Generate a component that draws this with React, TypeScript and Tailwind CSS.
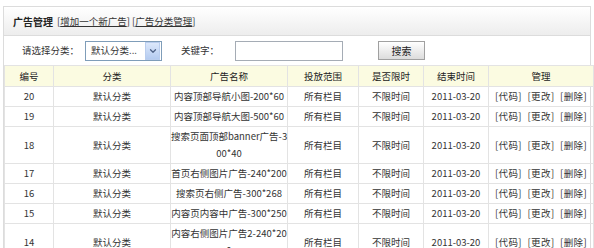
import { ChevronDown } from "lucide-react";

const rows = [
  { id: 20, name: ["内容顶部导航小图-200*60"] },
  { id: 19, name: ["内容顶部导航大图-500*60"] },
  { id: 18, name: ["搜索页面顶部banner广告-3", "00*40"] },
  { id: 17, name: ["首页右侧图片广告-240*200"] },
  { id: 16, name: ["搜索页右侧广告-300*268"] },
  { id: 15, name: ["内容页内容中广告-300*250"] },
  { id: 14, name: ["内容右侧图片广告2-240*20", "0"] },
];

const font = { fontFamily: '"Noto Sans CJK SC", sans-serif' };
const cell = "border border-[#e3e3e3] leading-[17px] py-px whitespace-nowrap";

export default function App() {
  return (
    <div className="w-[594px] h-[248px] overflow-hidden bg-white pt-[6px] px-[3px] text-[9.5px] text-[#333]" style={font}>
      <div className="border border-[#dcdcdc] border-b-0">
        <div className="h-[29px] flex items-center pl-[9px] gap-[4px] bg-gradient-to-b from-white to-[#ededed] border-b border-[#dcdcdc] whitespace-nowrap">
          <span className="font-bold text-[10px] text-[#222]">广告管理</span>
          <span>
            [<a className="underline">增加一个新广告</a>] [<a className="underline">广告分类管理</a>]
          </span>
        </div>
        <div className="h-[29px] flex items-center pl-[18px] whitespace-nowrap">
          <span>请选择分类：</span>
          <div className="ml-[6px] w-[77px] h-[20px] border border-[#7f9db9] flex items-center bg-white">
            <span className="pl-[5px] flex-1">默认分类...</span>
            <div className="w-[15px] h-[18px] mr-px bg-gradient-to-b from-[#dce8fb] to-[#b4cbf0] border border-[#b9cdee] flex items-center justify-center">
              <ChevronDown className="w-[10px] h-[10px] text-[#4d6185]" strokeWidth={3} />
            </div>
          </div>
          <span className="ml-[19px]">关键字：</span>
          <div className="ml-[16px] w-[108px] h-[20px] border border-[#a5acb5] bg-white" />
          <button className="ml-[35px] w-[47px] h-[19px] border border-[#a0a0a0] bg-gradient-to-b from-white to-[#dcdcdc] text-[10px] text-[#222]">
            搜索
          </button>
        </div>
        <table className="w-[589px] border-collapse table-fixed text-center">
          <colgroup>
            <col className="w-[49px]" />
            <col className="w-[117px]" />
            <col className="w-[117px]" />
            <col className="w-[71px]" />
            <col className="w-[65px]" />
            <col className="w-[65px]" />
            <col className="w-[105px]" />
          </colgroup>
          <thead>
            <tr className="bg-[#fbfbe1] h-[21px] text-[#222]">
              {["编号", "分类", "广告名称", "投放范围", "是否限时", "结束时间", "管理"].map((h) => (
                <th key={h} className={`${cell} font-normal`}>
                  {h}
                </th>
              ))}
            </tr>
          </thead>
          <tbody>
            {rows.map((r) => (
              <tr key={r.id} className="h-[20px]">
                <td className={cell}>{r.id}</td>
                <td className={cell}>默认分类</td>
                <td className={cell}>
                  {r.name.map((line, i) => (
                    <div key={i}>{line}</div>
                  ))}
                </td>
                <td className={cell}>所有栏目</td>
                <td className={cell}>不限时间</td>
                <td className={cell}>2011-03-20</td>
                <td className={`${cell} [word-spacing:3px] tracking-[0.4px]`}>[代码] [更改] [删除]</td>
              </tr>
            ))}
          </tbody>
        </table>
      </div>
    </div>
  );
}
